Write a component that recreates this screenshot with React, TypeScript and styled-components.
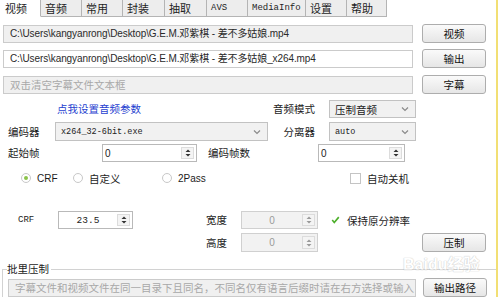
import React from "react";
import styled, { createGlobalStyle } from "styled-components";

const cn = `"Noto Sans CJK SC", "Liberation Sans", sans-serif`;
const mono = `"Liberation Mono", "Noto Sans CJK SC", monospace`;
const sans = `"Liberation Sans", "Noto Sans CJK SC", sans-serif`;

const GlobalStyle = createGlobalStyle`
  html, body { margin: 0; padding: 0; background: #fff; }
  body { font-family: ${cn}; font-size: 10px; color: #222; }
`;

const Window = styled.div`
  position: relative;
  width: 500px;
  height: 297px;
  overflow: hidden;
  display: flex;
  background: #fff;
`;

const Main = styled.div`
  width: 496px;
  display: flex;
  flex-direction: column;
`;

const Strip = styled.div`
  width: 2px;
  background: #f2df74;
`;

const Edge = styled.div`
  flex: 1;
  background: #fff;
`;

const TabBar = styled.div`
  display: flex;
  height: 17px;
`;

const Tab = styled.div<{ $w: number; $active?: boolean; $mono?: boolean }>`
  width: ${(p) => p.$w}px;
  height: 17px;
  box-sizing: border-box;
  padding-left: ${(p) => (p.$active ? 5 : 4)}px;
  border-right: 1px solid #b4b4b4;
  border-bottom: 1px solid ${(p) => (p.$active ? "#fff" : "#b4b4b4")};
  background: ${(p) => (p.$active ? "#fff" : "#ededed")};
  font-family: ${(p) => (p.$mono ? mono : cn)};
  font-size: ${(p) => (p.$mono ? "9px" : "11px")};
  line-height: 16px;
  color: #1e1e1e;
  white-space: nowrap;
`;

const TabFill = styled.div`
  flex: 1;
  border-bottom: 1px solid #fff;
`;

const FileRow = styled.div<{ $mt: number }>`
  display: flex;
  align-items: center;
  gap: 9px;
  margin-top: ${(p) => p.$mt}px;
  padding-left: 3px;
  height: 19px;
`;

const PathField = styled.div<{ $w: number; $white?: boolean; $hint?: boolean }>`
  width: ${(p) => p.$w}px;
  height: 18px;
  box-sizing: border-box;
  border: 1px solid #cbcbcb;
  background: ${(p) => (p.$white ? "#fff" : "#f0f0f0")};
  color: ${(p) => (p.$hint ? "#a8a8a8" : "#2a2a2a")};
  font-family: ${sans};
  font-size: ${(p) => (p.$hint ? "10.5px" : "10px")};
  letter-spacing: ${(p) => (p.$hint ? "0" : "-0.1px")};
  line-height: 16px;
  padding-left: 6px;
  white-space: nowrap;
  overflow: hidden;
`;

const Btn = styled.div<{ $ml?: number }>`
  width: 64px;
  height: 19px;
  margin-left: ${(p) => p.$ml ?? 0}px;
  box-sizing: border-box;
  border: 1px solid #adadad;
  border-radius: 3px;
  background: linear-gradient(#fafafa, #e6e6e6);
  display: flex;
  align-items: center;
  justify-content: center;
  font-family: ${cn};
  font-size: 10.5px;
  color: #111;
`;

const FormRow = styled.div<{ $mt: number; $pl: number; $h?: number }>`
  display: flex;
  align-items: center;
  margin-top: ${(p) => p.$mt}px;
  padding-left: ${(p) => p.$pl}px;
  height: ${(p) => p.$h ?? 18}px;
`;

const Label = styled.div<{ $w: number; $right?: boolean; $mono?: boolean; $pl?: number }>`
  width: ${(p) => p.$w}px;
  flex: none;
  box-sizing: border-box;
  padding-left: ${(p) => p.$pl ?? 0}px;
  text-align: ${(p) => (p.$right ? "right" : "left")};
  font-family: ${(p) => (p.$mono ? mono : cn)};
  font-size: ${(p) => (p.$mono ? "9px" : "10.5px")};
  line-height: 14px;
  color: #1c1c1c;
  white-space: nowrap;
`;

const Link = styled.div<{ $w: number }>`
  width: ${(p) => p.$w}px;
  flex: none;
  font-size: 10.5px;
  line-height: 14px;
  color: #1f3fd0;
  white-space: nowrap;
`;

const SelectBox = styled.div<{ $w: number; $ml?: number; $h?: number }>`
  width: ${(p) => p.$w}px;
  height: ${(p) => p.$h ?? 18}px;
  margin-left: ${(p) => p.$ml ?? 0}px;
  flex: none;
  box-sizing: border-box;
  border: 1px solid #c2c2c2;
  background: #f1f1f1;
  display: flex;
  align-items: center;
  padding: 0 6px 0 5px;
`;

const SelectText = styled.div<{ $mono?: boolean }>`
  flex: 1;
  font-family: ${(p) => (p.$mono ? mono : cn)};
  font-size: ${(p) => (p.$mono ? "8.5px" : "10.5px")};
  color: #222;
  white-space: nowrap;
`;

const SpinBox = styled.div<{ $w: number; $ml?: number; $h?: number; $off?: boolean }>`
  width: ${(p) => p.$w}px;
  height: ${(p) => p.$h ?? 18}px;
  margin-left: ${(p) => p.$ml ?? 0}px;
  flex: none;
  box-sizing: border-box;
  border: 1px solid ${(p) => (p.$off ? "#d0d0d0" : "#b9b9b9")};
  background: ${(p) => (p.$off ? "#f2f2f2" : "#fff")};
  display: flex;
  align-items: stretch;
`;

const SpinValue = styled.div<{ $center?: boolean; $mono?: boolean; $off?: boolean }>`
  flex: 1;
  display: flex;
  align-items: center;
  justify-content: ${(p) => (p.$center ? "center" : "flex-start")};
  padding-left: ${(p) => (p.$center ? 0 : 2)}px;
  font-family: ${(p) => (p.$mono ? mono : sans)};
  font-size: ${(p) => (p.$mono ? "9.5px" : "10px")};
  color: ${(p) => (p.$off ? "#9a9a9a" : "#222")};
`;

const SpinArrows = styled.div`
  width: 11px;
  margin: 2px 2px 2px 0;
  border: 1px solid #dcdcdc;
  background: #f4f4f4;
  display: flex;
  align-items: center;
  justify-content: center;
`;

const Option = styled.div<{ $w?: number; $ml?: number }>`
  width: ${(p) => (p.$w ? `${p.$w}px` : "auto")};
  margin-left: ${(p) => p.$ml ?? 0}px;
  flex: none;
  display: flex;
  align-items: center;
  gap: 6px;
  font-size: 10.5px;
  color: #1c1c1c;
`;

const OptionLatin = styled.span`
  font-family: ${sans};
  font-size: 10px;
`;

const Radio = styled.span<{ $on?: boolean }>`
  width: 8px;
  height: 8px;
  border-radius: 50%;
  border: 1px solid #c8c8c8;
  background: #fff;
  display: flex;
  align-items: center;
  justify-content: center;
  &::after {
    content: "";
    width: 4px;
    height: 4px;
    border-radius: 50%;
    background: ${(p) => (p.$on ? "#8bc34a" : "transparent")};
  }
`;

const Check = styled.span<{ $on?: boolean }>`
  width: 11px;
  height: 11px;
  box-sizing: border-box;
  border: 1px solid ${(p) => (p.$on ? "transparent" : "#c4c4c4")};
  background: #fff;
  display: flex;
  align-items: center;
  justify-content: center;
`;

const Group = styled.div`
  margin-top: 11px;
  margin-left: 2px;
  display: flex;
  flex-direction: column;
`;

const GroupHead = styled.div`
  display: flex;
  align-items: center;
  height: 12px;
`;

const GroupTick = styled.div`
  width: 5px;
  height: 6px;
  align-self: flex-end;
  box-sizing: border-box;
  border-top: 1px solid #d2d2d2;
  border-left: 1px solid #d2d2d2;
`;

const GroupTitle = styled.div`
  font-size: 10.5px;
  line-height: 12px;
  color: #1c1c1c;
  padding-right: 2px;
`;

const GroupLine = styled.div`
  flex: 1;
  height: 1px;
  margin-top: 1px;
  background: #d2d2d2;
`;

const GroupBody = styled.div`
  display: flex;
  align-items: center;
  gap: 7px;
  padding: 3px 0 0 5px;
  border-left: 1px solid #d2d2d2;
`;

const Watermark = styled.div`
  position: absolute;
  left: 403px;
  top: 256px;
  opacity: 0.45;
  pointer-events: none;
`;

const MarkText = styled.div`
  font-family: ${sans};
  font-size: 16px;
  font-weight: bold;
  color: #fff;
  line-height: 17px;
  text-shadow: 0 0 1px #8a8a8a, 0 0 1px #8a8a8a;
  white-space: nowrap;
`;

const Chevron = () => (
  <svg width="8" height="6" viewBox="0 0 8 6">
    <path d="M1 1.5 L4 4.5 L7 1.5" fill="none" stroke="#8a8a8a" strokeWidth="1.2" />
  </svg>
);

const Arrows = ({ off }: { off?: boolean }) => (
  <svg width="6" height="10" viewBox="0 0 6 10">
    <path d="M3 1.5 L5.5 4 H0.5 Z M3 8.5 L5.5 6 H0.5 Z" fill={off ? "#9a9a9a" : "#333"} />
  </svg>
);

const Tick = () => (
  <svg width="11" height="10" viewBox="0 0 11 10">
    <path d="M1.5 5 L4 8 L9.5 1.5" fill="none" stroke="#4caf2a" strokeWidth="2" />
  </svg>
);

const Spin = (p: {
  w: number;
  ml?: number;
  h?: number;
  value: string;
  center?: boolean;
  mono?: boolean;
  off?: boolean;
}) => (
  <SpinBox $w={p.w} $ml={p.ml} $h={p.h} $off={p.off}>
    <SpinValue $center={p.center} $mono={p.mono} $off={p.off}>
      {p.value}
    </SpinValue>
    <SpinArrows>
      <Arrows off={p.off} />
    </SpinArrows>
  </SpinBox>
);

const Select = (p: { w: number; ml?: number; h?: number; value: string; mono?: boolean }) => (
  <SelectBox $w={p.w} $ml={p.ml} $h={p.h}>
    <SelectText $mono={p.mono}>{p.value}</SelectText>
    <Chevron />
  </SelectBox>
);

const tabs = [
  { label: "视频", w: 41 },
  { label: "音频", w: 41 },
  { label: "常用", w: 41 },
  { label: "封装", w: 42 },
  { label: "抽取", w: 42 },
  { label: "AVS", w: 41, mono: true },
  { label: "MediaInfo", w: 58, mono: true },
  { label: "设置", w: 41 },
  { label: "帮助", w: 40 },
];

export default function App() {
  return (
    <>
      <GlobalStyle />
      <Window>
        <Main>
          <TabBar>
            {tabs.map((t, i) => (
              <Tab key={t.label} $w={t.w} $active={i === 0} $mono={t.mono}>
                {t.label}
              </Tab>
            ))}
            <TabFill />
          </TabBar>

          <FileRow $mt={7}>
            <PathField $w={410}>C:\Users\kangyanrong\Desktop\G.E.M.邓紫棋 - 差不多姑娘.mp4</PathField>
            <Btn>视频</Btn>
          </FileRow>
          <FileRow $mt={6}>
            <PathField $w={410} $white>
              C:\Users\kangyanrong\Desktop\G.E.M.邓紫棋 - 差不多姑娘_x264.mp4
            </PathField>
            <Btn>输出</Btn>
          </FileRow>
          <FileRow $mt={7}>
            <PathField $w={410} $hint>
              双击清空字幕文件文本框
            </PathField>
            <Btn>字幕</Btn>
          </FileRow>

          <FormRow $mt={6} $pl={57}>
            <Link $w={216}>点我设置音频参数</Link>
            <Label $w={42} $right>
              音频模式
            </Label>
            <Select w={87} ml={14} value="压制音频" />
          </FormRow>

          <FormRow $mt={4} $pl={8} $h={19}>
            <Label $w={47}>编码器</Label>
            <Select w={213} h={19} value="x264_32-6bit.exe" mono />
            <Label $w={47} $right>
              分离器
            </Label>
            <Select w={87} h={19} ml={14} value="auto" mono />
          </FormRow>

          <FormRow $mt={3} $pl={8}>
            <Label $w={94}>起始帧</Label>
            <Spin w={95} value="0" />
            <Label $w={121} $pl={11}>
              编码帧数
            </Label>
            <Spin w={87} value="0" />
          </FormRow>

          <FormRow $mt={7} $pl={21}>
            <Option $w={52}>
              <Radio $on />
              <OptionLatin>CRF</OptionLatin>
            </Option>
            <Option $w={89}>
              <Radio />
              自定义
            </Option>
            <Option $w={188}>
              <Radio />
              <OptionLatin>2Pass</OptionLatin>
            </Option>
            <Option>
              <Check />
              自动关机
            </Option>
          </FormRow>

          <FormRow $mt={24} $pl={18}>
            <Label $w={40} $mono>
              CRF
            </Label>
            <Spin w={75} value="23.5" center mono />
            <Label $w={94} $right>
              宽度
            </Label>
            <Spin w={77} ml={14} value="0" center off />
            <Option $ml={12}>
              <Check $on>
                <Tick />
              </Check>
              保持原分辨率
            </Option>
          </FormRow>

          <FormRow $mt={4} $pl={8} $h={19}>
            <Label $w={219} $right>
              高度
            </Label>
            <Spin w={77} ml={14} h={19} value="0" center off />
            <Btn $ml={104}>压制</Btn>
          </FormRow>

          <Group>
            <GroupHead>
              <GroupTick />
              <GroupTitle>批里压制</GroupTitle>
              <GroupLine />
            </GroupHead>
            <GroupBody>
              <PathField $w={408} $hint>
                字幕文件和视频文件在同一目录下且同名，不同名仅有语言后缀时请在右方选择或输入
              </PathField>
              <Btn>输出路径</Btn>
            </GroupBody>
          </Group>
        </Main>
        <Strip />
        <Edge />
        <Watermark>
          <MarkText>Baidu经验</MarkText>
        </Watermark>
      </Window>
    </>
  );
}
